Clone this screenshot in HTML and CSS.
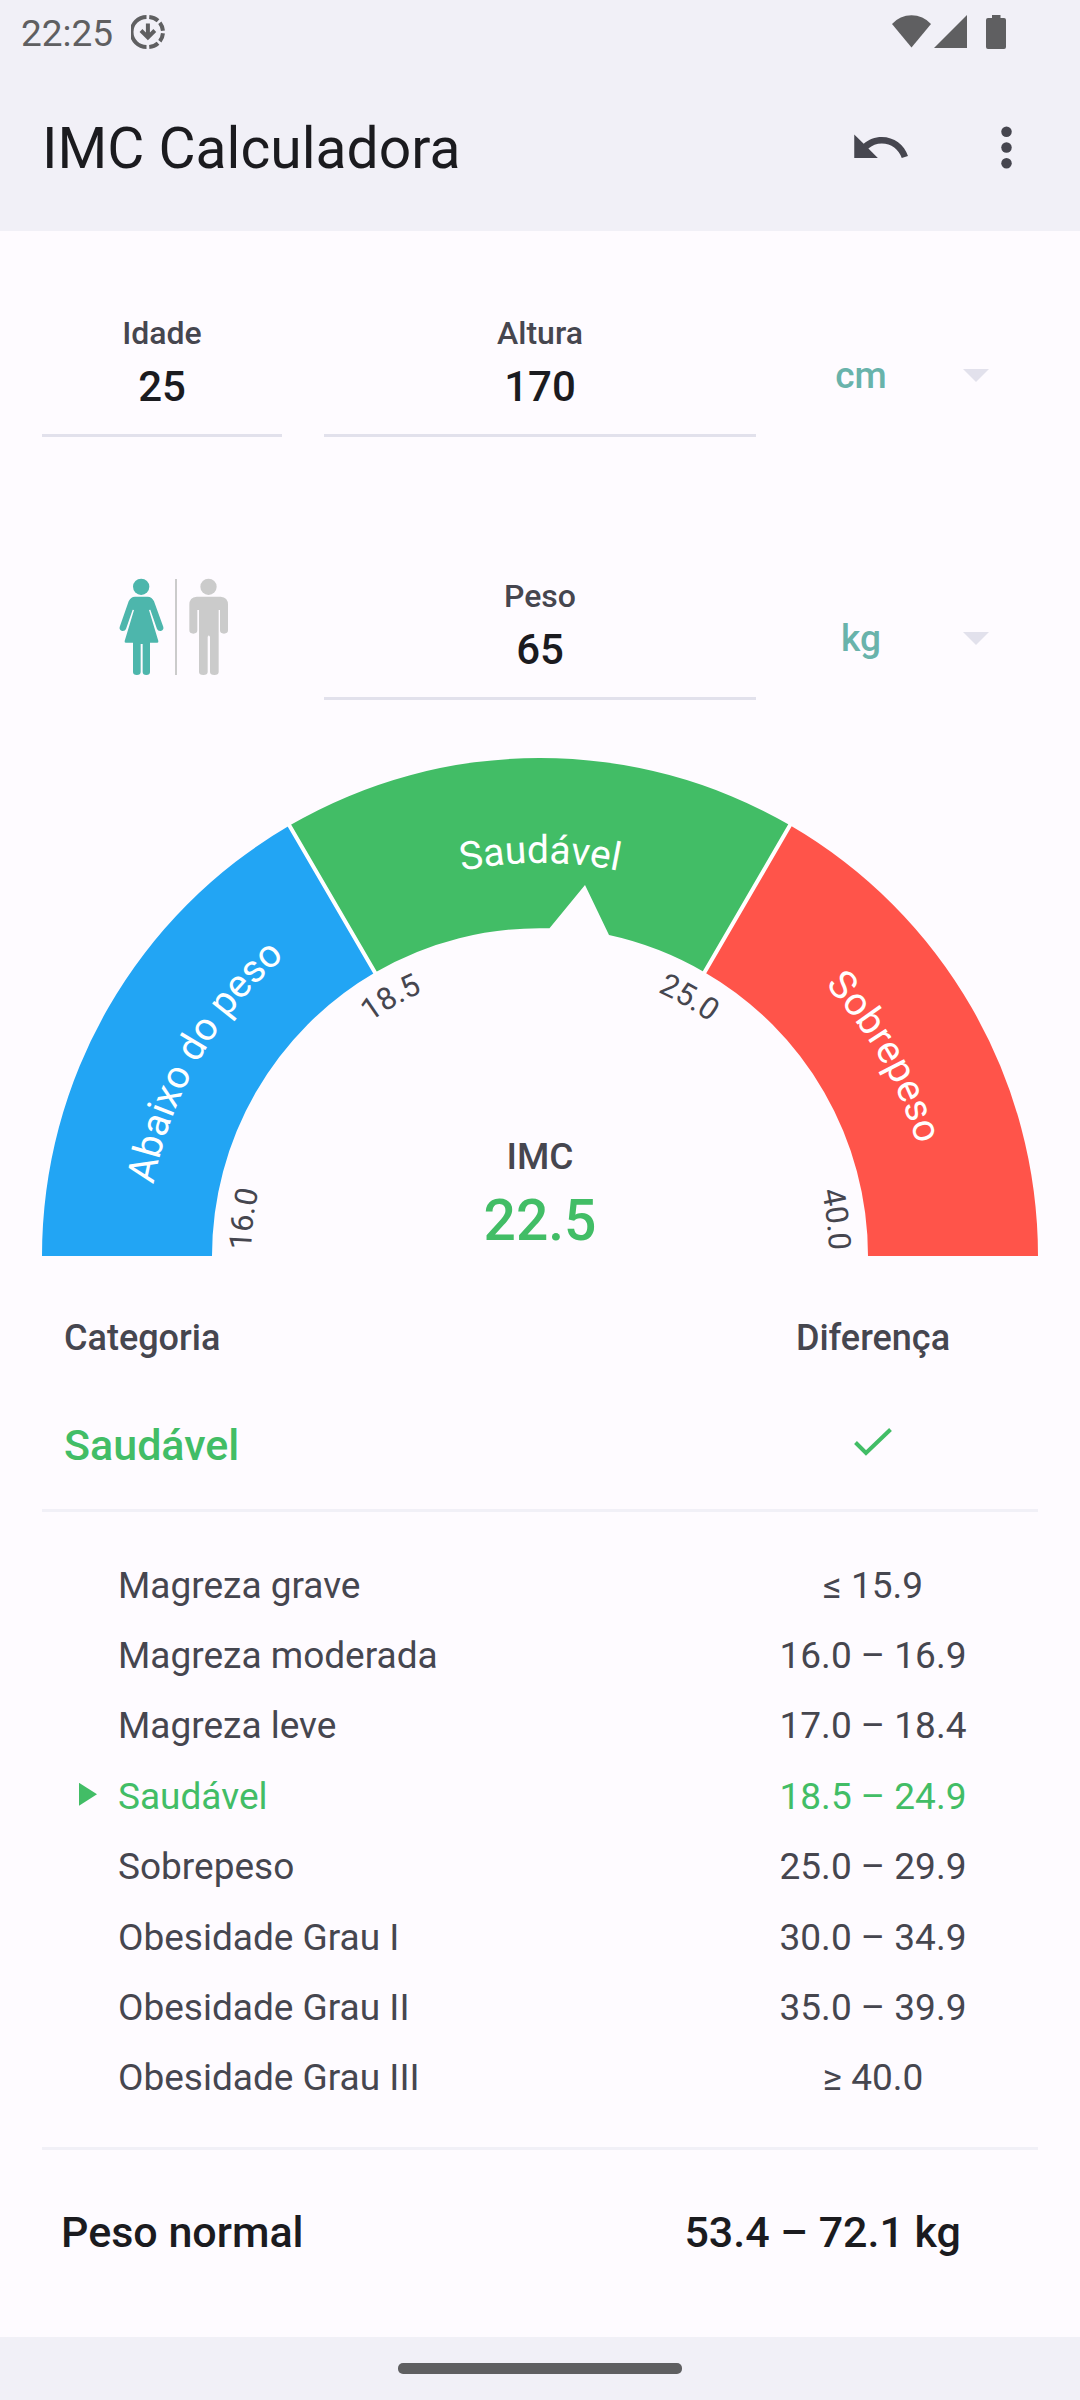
FILE: index.html
```html
<!DOCTYPE html>
<html lang="pt">
<head>
<meta charset="utf-8">
<meta name="viewport" content="width=device-width, initial-scale=1">
<title>IMC Calculadora</title>
<link rel="stylesheet" href="styles.css">
</head>
<body>
<header class="top">
  <div class="status">
    <time class="clock">22:25</time>
    <svg class="download" viewBox="0 0 34 34" width="34" height="34" aria-hidden="true">
      <path d="M15.500 2A15 15 0 0 0 15.500 32" />
      <path d="M17 2A15 15 0 0 1 17 32" pathLength="180" stroke-dasharray="0 5 37 10 33 10 33 10 37 5" />
      <path d="M16.900 8.500V22M10 15.500l6.900 7l6.900 -7" />
    </svg>
    <div class="signals">
      <svg viewBox="0 0 39 33" width="39" height="33" aria-hidden="true"><path d="M0 9A26 26 0 0 1 39 9L19.500 32.500Z"/></svg>
      <svg viewBox="0 0 33 33" width="33" height="33" aria-hidden="true"><path d="M33 0V33H0Z"/></svg>
      <svg class="battery" viewBox="0 0 20 34" width="20" height="34" aria-hidden="true"><path d="M6 0H14.500V3H18Q20 3 20 5V32Q20 34 18 34H2Q0 34 0 32V5Q0 3 2 3H6Z"/></svg>
    </div>
  </div>
  <div class="toolbar">
    <h1 class="title">IMC Calculadora</h1>
    <button class="icon-button" type="button" aria-label="Desfazer">
      <svg viewBox="0 0 24 24"><path d="M12.500 8c-2.650 0-5.050.99-6.900 2.600L2 7v9h9l-3.620-3.620c1.390-1.160 3.160-1.880 5.120-1.880 3.540 0 6.550 2.310 7.600 5.500l2.370-.78C21.080 11.030 17.150 8 12.500 8z"/></svg>
    </button>
    <button class="icon-button" type="button" aria-label="Mais opções">
      <svg viewBox="0 0 24 24"><circle cx="12" cy="6" r="2"/><circle cx="12" cy="12" r="2"/><circle cx="12" cy="18" r="2"/></svg>
    </button>
  </div>
</header>

<main class="content">
  <form class="form">
    <div class="field">
      <label for="age">Idade</label>
      <input id="age" type="text" inputmode="numeric" value="25">
    </div>
    <div class="field">
      <label for="height">Altura</label>
      <input id="height" type="text" inputmode="numeric" value="170">
    </div>
    <div class="unit">
      <select aria-label="Unidade de altura"><option>cm</option></select>
      <svg viewBox="0 0 26 13" width="26" height="13" aria-hidden="true"><path d="M0 0H26L13 13Z"/></svg>
    </div>

    <div class="gender" role="radiogroup" aria-label="Sexo">
      <label class="option">
        <input type="radio" name="gender" aria-label="Feminino" checked>
        <svg viewBox="57 54 135 294" width="45" height="98" aria-hidden="true">
          <circle cx="123.500" cy="80.500" r="24.500"/>
          <path d="M105 110H143Q156 110 162 124L190 201Q192 210 182 213Q174 214 171 207L151 149L147 150L175 243Q176 248 172 248H150V336Q150 345 139 345Q128 345 128 336V252H122V336Q122 345 110.500 345Q99 345 99 336V248H77Q73 248 74 243L102 150L98 149L78 207Q75 214 67 213Q57 210 59 201L86 124Q92 110 105 110Z"/>
        </svg>
      </label>
      <span class="bar"></span>
      <label class="option">
        <input type="radio" name="gender" aria-label="Masculino">
        <svg viewBox="261 54 123 294" width="41" height="98" aria-hidden="true">
          <circle cx="322.500" cy="80.500" r="24.500"/>
          <path d="M287 110H359Q381 112 381 134V211Q381 221 369 221Q357 221 357 211V150H353V336Q353 345 340 345Q327 345 327 336V230L323.500 226L320 230V336Q320 345 307 345Q294 345 294 336V150H289V211Q289 221 277 221Q265 221 265 211V134Q265 112 287 110Z"/>
        </svg>
      </label>
    </div>
    <div class="field">
      <label for="weight">Peso</label>
      <input id="weight" type="text" inputmode="numeric" value="65">
    </div>
    <div class="unit">
      <select aria-label="Unidade de peso"><option>kg</option></select>
      <svg viewBox="0 0 26 13" width="26" height="13" aria-hidden="true"><path d="M0 0H26L13 13Z"/></svg>
    </div>
  </form>

  <svg class="gauge" viewBox="0 0 996 498" role="img" aria-label="IMC 22.5, Saudável">
    <defs>
      <path id="arc-low" d="M105 498A393 393 0 0 1 301.500 157.650"/>
      <path id="arc-mid" d="M301.500 157.650A393 393 0 0 1 694.500 157.650"/>
      <path id="arc-high" d="M694.500 157.650A393 393 0 0 1 891 498"/>
      <path id="arc-scale" d="M209 498A289 289 0 0 1 787 498"/>
    </defs>
    <path class="low" d="M0 498A498 498 0 0 1 247.500 67.600L333 214.500A328 328 0 0 0 170 498Z"/>
    <path class="mid" d="M247.500 67.600A498 498 0 0 1 748 67.300L662.500 214.200A328 328 0 0 0 567 177L543 127L507.500 170.300A328 328 0 0 0 333 214.500Z"/>
    <path class="high" d="M748 67.300A498 498 0 0 1 996 498H826A328 328 0 0 0 662.500 214.200Z"/>
    <path class="split" d="M246.500 65.900L334 216.200M749 65.600L661.500 215.900"/>
    <text class="zone"><textPath href="#arc-low" startOffset="50%">Abaixo do peso</textPath></text>
    <text class="zone"><textPath href="#arc-mid" startOffset="50%">Saudável</textPath></text>
    <text class="zone"><textPath href="#arc-high" startOffset="50%">Sobrepeso</textPath></text>
    <text class="tick tick-first"><textPath href="#arc-scale" startOffset="6">16.0</textPath></text>
    <text class="tick"><textPath href="#arc-scale" startOffset="33.333%">18.5</textPath></text>
    <text class="tick"><textPath href="#arc-scale" startOffset="66.667%">25.0</textPath></text>
    <text class="tick tick-last"><textPath href="#arc-scale" startOffset="902">40.0</textPath></text>
    <text class="caption" x="498" y="411">IMC</text>
    <text class="result" x="498" y="482">22.5</text>
  </svg>

  <table class="summary">
    <thead>
      <tr><th scope="col">Categoria</th><th scope="col">Diferença</th></tr>
    </thead>
    <tbody>
      <tr>
        <td>Saudável</td>
        <td><svg class="check" viewBox="0 0 38 29" width="38" height="29" role="img" aria-label="Sem diferença"><path d="M1.500 14.500L12 25L36.500 1.500"/></svg></td>
      </tr>
    </tbody>
  </table>

  <div class="ranges">
    <table class="range-table" aria-label="Faixas de IMC">
      <tbody>
        <tr><th scope="row">Magreza grave</th><td>≤ 15.9</td></tr>
        <tr><th scope="row">Magreza moderada</th><td>16.0 – 16.9</td></tr>
        <tr><th scope="row">Magreza leve</th><td>17.0 – 18.4</td></tr>
        <tr class="current"><th scope="row">Saudável</th><td>18.5 – 24.9</td></tr>
        <tr><th scope="row">Sobrepeso</th><td>25.0 – 29.9</td></tr>
        <tr><th scope="row">Obesidade Grau I</th><td>30.0 – 34.9</td></tr>
        <tr><th scope="row">Obesidade Grau II</th><td>35.0 – 39.9</td></tr>
        <tr><th scope="row">Obesidade Grau III</th><td>≥ 40.0</td></tr>
      </tbody>
    </table>
  </div>

  <div class="normal">
    <span>Peso normal</span>
    <span>53.4 – 72.1 kg</span>
  </div>
</main>

<footer class="nav"><span class="handle"></span></footer>
</body>
</html>
```

FILE: styles.css
```css
:root {
  --page: #fefbff;
  --bar: #f1f0f7;
  --ink: #1b1b1f;
  --ink-soft: #46464f;
  --line: #e2e1ec;
  --system: #5f5f61;
  --green: #42bd66;
  --teal: #4db6ac;
}

* { box-sizing: border-box; }

body {
  margin: 0;
  min-height: 100vh;
  display: flex;
  flex-direction: column;
  background: var(--page);
  color: var(--ink-soft);
  font-family: Roboto, "Liberation Sans", sans-serif;
  font-size: 37px;
}

svg { display: block; }

/* Status bar and toolbar */
.top { background: var(--bar); }

.status {
  display: flex;
  align-items: center;
  height: 63px;
  padding: 0 74px 0 21px;
  color: var(--system);
}

.clock { padding-top: 3px; }

.download {
  margin-left: 18px;
  fill: none;
  stroke: currentColor;
  stroke-width: 4;
}

.signals {
  display: flex;
  align-items: center;
  gap: 3px;
  margin-left: auto;
  fill: currentColor;
}

.battery { margin-left: 16px; }

.toolbar {
  display: flex;
  align-items: center;
  gap: 63px;
  height: 168px;
  padding: 0 42px;
}

.title {
  flex: 1;
  margin: 0;
  padding-top: 3px;
  color: var(--ink);
  font-size: 57px;
  font-weight: 400;
}

.icon-button {
  width: 63px;
  height: 63px;
  padding: 0;
  border: 0;
  background: none;
  fill: var(--ink-soft);
}

/* Inputs */
.content {
  flex: 1;
  padding: 82px 42px 24px;
}

.form {
  display: grid;
  grid-template-columns: 5fr 9fr 5fr;
  gap: 139px 42px;
}

.field {
  display: flex;
  flex-direction: column;
  min-width: 0;
  padding-bottom: 15px;
  border-bottom: 3px solid var(--line);
  text-align: center;
}

.field label {
  font-size: 32px;
  font-weight: 500;
  line-height: 40px;
}

.field input {
  width: 100%;
  height: 66px;
  padding: 0;
  border: 0;
  background: none;
  color: var(--ink);
  font: 500 42px Roboto, "Liberation Sans", sans-serif;
  text-align: center;
}

.unit {
  display: grid;
  align-items: center;
}

.unit > * { grid-area: 1 / 1; }

.unit select {
  width: 100%;
  height: 100%;
  padding: 0 114px 0 0;
  border: 0;
  background: none;
  color: #69b3ab;
  font: 500 37px Roboto, "Liberation Sans", sans-serif;
  text-align: center;
  text-align-last: center;
  appearance: none;
}

.unit svg {
  justify-self: end;
  margin-right: 49px;
  fill: var(--line);
  pointer-events: none;
}

.gender {
  display: flex;
  align-items: center;
  gap: 11px;
  height: 102px;
  padding-left: 77px;
}

.option {
  display: grid;
  fill: #cbcbcb;
}

.option > * { grid-area: 1 / 1; }

.option input {
  width: 1px;
  height: 1px;
  margin: 0;
  opacity: 0;
}

.option:has(:checked) { fill: var(--teal); }

.bar {
  width: 2px;
  height: 96px;
  background: #cbcbcb;
}

/* Gauge */
.gauge {
  width: 100%;
  margin-top: 58px;
}

.low { fill: #22a5f4; }
.mid { fill: var(--green); }
.high { fill: #ff544a; }

.split {
  fill: none;
  stroke: #fff;
  stroke-width: 4;
}

.gauge text { text-anchor: middle; }

.zone {
  fill: #fff;
  font-size: 39px;
}

.tick {
  fill: var(--ink-soft);
  font-size: 31px;
}

.gauge .tick-first { text-anchor: start; }
.gauge .tick-last { text-anchor: end; }

.caption {
  fill: var(--ink-soft);
  font-size: 37px;
  font-weight: 500;
}

.result {
  fill: var(--green);
  font-size: 57px;
  font-weight: 500;
}

/* Category tables */
table {
  width: 100%;
  border-collapse: collapse;
  table-layout: fixed;
}

th, td {
  padding: 0;
  text-align: left;
}

tr > :last-child {
  width: calc(100% / 3);
  padding-left: 2px;
  text-align: center;
}

.summary {
  margin: 28px 0 11px;
  font-weight: 500;
}

.summary tr { height: 107px; }

.summary th {
  font-size: 36px;
  font-weight: 500;
}

.summary tr > :first-child { padding-left: 22px; }

.summary td {
  color: var(--green);
  font-size: 43px;
}

.check {
  margin: 0 auto 4px;
  fill: none;
  stroke: var(--green);
  stroke-width: 4;
}

.ranges {
  padding: 38px 0 34px;
  border: solid var(--bar);
  border-width: 3px 0;
}

.range-table { height: 563px; }

.range-table th {
  padding-left: 37px;
  font-weight: 400;
}

.range-table th::before {
  content: "";
  display: inline-block;
  width: 18px;
  height: 23px;
  margin: 0 21px 3px 0;
  clip-path: polygon(0 0, 100% 50%, 0 100%);
}

.current { color: var(--green); }
.current th::before { background: var(--green); }

.normal {
  display: flex;
  align-items: center;
  justify-content: space-between;
  height: 163px;
  padding: 0 77px 0 19px;
  color: var(--ink);
  font-size: 43px;
  font-weight: 500;
}

/* Gesture bar */
.nav {
  display: grid;
  place-items: center;
  height: 63px;
  background: var(--bar);
}

.handle {
  width: 284px;
  height: 11px;
  border-radius: 5px;
  background: var(--system);
}
```
